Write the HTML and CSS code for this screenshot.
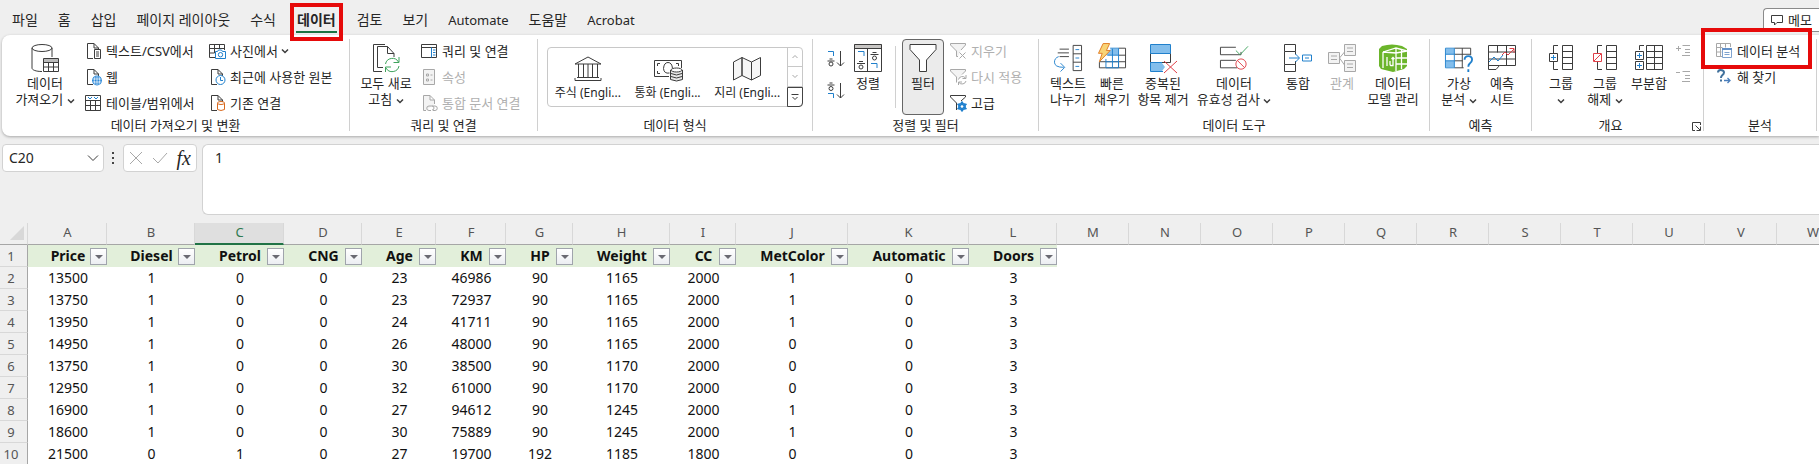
FILE: index.html
```html
<!DOCTYPE html>
<html lang="ko">
<head>
<meta charset="utf-8">
<title>데이터</title>
<link rel="stylesheet" href="styles.css">
</head>
<body>
<svg class="defs" aria-hidden="true">
  <symbol id="chev" viewBox="0 0 8 8"><path class="k" stroke-width="1.500" d="M1 2.500 4 5.500l3-3"/></symbol>
  <symbol id="doc" viewBox="0 0 18 18"><path class="k" d="M8 16.500H2.500v-15H9l4.500 4.500V8M9 1.500V6h4.500"/></symbol>
  <symbol id="tri" viewBox="0 0 8 4"><path fill="#6a6a72" d="M0 0h8L4 4z"/></symbol>
</svg>

<header class="top">
  <nav class="tabs">
    <a href="#">파일</a><a href="#">홈</a><a href="#">삽입</a><a href="#">페이지 레이아웃</a><a href="#">수식</a><a href="#" class="active marked" aria-current="page">데이터</a><a href="#">검토</a><a href="#">보기</a><a href="#" class="latin">Automate</a><a href="#">도움말</a><a href="#" class="latin">Acrobat</a>
  </nav>
  <button class="memo"><svg width="12" height="12" viewBox="0 0 12 12"><path class="k" d="M.5 1.500h11v7H6L3.500 11V8.500h-3z"/></svg>메모</button>
</header>

<main>
<section class="ribbon">
  <div class="group g-import">
    <div class="body">
      <button class="big"><svg class="ic" viewBox="0 0 28 28"><path class="k" d="M11 27.500C5 27.500 1 26 1 24V4M21 4v9"/><ellipse class="k" cx="11" cy="4" rx="10" ry="3.500"/><path class="k" fill="#fff" d="M12.500 14.500h15v13h-15z"/><path fill="#bbb" d="M13 15h14v3H13z"/><path class="k" d="M12.500 18.500h15M12.500 23h15M17.500 18v9.500M22.500 18v9.500"/></svg><span>데이터</span><span>가져오기 <svg class="cv"><use href="#chev"/></svg></span></button>
      <div class="rows">
        <button class="sm"><svg viewBox="0 0 18 18"><use href="#doc"/><path class="k" fill="#fff" d="M9.500 7.500h6v9h-6zM11 10h3M11 12h3M11 14h3"/></svg>텍스트/CSV에서</button>
        <button class="sm"><svg viewBox="0 0 18 18"><use href="#doc"/><circle cx="12" cy="12.500" r="5" fill="#2b88d8"/><path stroke="#fff" fill="none" d="M7.500 11h9M7.500 14h9M12 8v9M10 8.500q-1.500 4 0 8M14 8.500q1.500 4 0 8" stroke-width=".7"/></svg>웹</button>
        <button class="sm"><svg viewBox="0 0 18 18"><path class="k" d="M.5 1.500h15v15H.5zM.5 6.500h15M.5 11.500h15M5.500 6v10.500M10.500 6v10.500"/><path class="b" d="m3 3 2 2 2-2M9 3l2 2 2-2"/></svg>테이블/범위에서</button>
      </div>
      <div class="rows">
        <button class="sm"><svg viewBox="0 0 18 18"><path class="k" d="M6 15.500H.5v-13h15V8M.5 6.500h15M.5 11h5M5.500 2.500V11M10.500 2.500V7"/><path class="b" fill="#fff" d="M6.500 9.500h2l1-1.500h3l1 1.500h3v7h-10z"/><circle class="b" cx="11.500" cy="12.700" r="2.200"/></svg>사진에서 <svg class="cv"><use href="#chev"/></svg></button>
        <button class="sm"><svg viewBox="0 0 18 18"><use href="#doc"/><circle class="b" cx="11.500" cy="12" r="4.500" fill="#fff"/><path class="b" d="M11.500 9v3.500H14"/></svg>최근에 사용한 원본</button>
        <button class="sm"><svg viewBox="0 0 18 18"><use href="#doc"/><path class="o" fill="#fff" d="M8.500 9v6.500q3.500 2 7 0V9"/><ellipse class="o" cx="12" cy="9" rx="3.500" ry="1.500" fill="#fff"/></svg>기존 연결</button>
      </div>
    </div>
    <div class="label">데이터 가져오기 및 변환</div>
  </div>

  <div class="group g-query">
    <div class="body">
      <button class="big"><svg class="ic" viewBox="0 0 28 28"><path class="k" d="M10 27.500H1.500V.5H13M11 23.500H5.500v-21h10l6.500 7V13M15.500 2.500v7H22"/><path class="g" d="M13.500 20a7 7 0 0 1 13-2M27 13v5.500h-5.500M27 22a7 7 0 0 1-13 2M13.500 28v-5h5.500"/></svg><span>모두 새로</span><span>고침 <svg class="cv"><use href="#chev"/></svg></span></button>
      <div class="rows">
        <button class="sm"><svg viewBox="0 0 18 18"><path class="k" d="M.5 2.500h15v13H.5zM.5 5.500h15"/><path class="b" d="M10.500 5.500v10M12 8h2.500M12 10.500h2.500M12 13h2.500"/></svg>쿼리 및 연결</button>
        <button class="sm" disabled><svg viewBox="0 0 18 18"><path class="l" fill="#f3f3f3" d="M2.500 1.500h11v15h-11z"/><path class="l" d="M5.500 6h2v2h-2zM5.500 11h2v2h-2zM9.500 7h2M9.500 12h2"/></svg>속성</button>
        <button class="sm" disabled><svg viewBox="0 0 18 18"><path class="l" fill="#f3f3f3" d="M5 16.500H2.500v-15H9l4.500 4.500v4M9 1.500V6h4.500"/><path class="l" d="M10 16.500H8a2 2 0 0 1 0-4.500h3a2 2 0 0 1 0 4M11 12h3a2 2 0 0 1 0 4.500h-2"/></svg>통합 문서 연결</button>
      </div>
    </div>
    <div class="label">쿼리 및 연결</div>
  </div>

  <div class="group g-types">
    <div class="body">
      <div class="gallery">
        <button class="item"><svg viewBox="0 0 28 25"><path class="k" d="M1 8 14 1l13 7zM1 24.500h26M3 21.500h22M4.500 8v13.500M9.500 8v13.500M14 8v13.500M18.500 8v13.500M23.500 8v13.500M1 22v2.500M27 22v2.500"/></svg><span>주식 (Engli...</span></button>
        <button class="item"><svg viewBox="0 0 28 25"><path class="k" d="M15 20.500H.5v-16h27V12M6 7.500H3.500V10M3.500 15v2.500H6M22 7.500h2.500V10M15.500 17q-5.500 1-6-4.500.5-6 4.500-6 4 0 4.500 6"/><path class="k" fill="#e8e8e8" d="M16.500 14v9.500q6 3 12 0V14"/><ellipse class="k" cx="22.500" cy="14" rx="5.500" ry="2" fill="#fff"/><path class="k" d="M17 17.500q5.500 3 11 0M17 20.500q5.500 3 11 0"/></svg><span>통화 (Engli...</span></button>
        <button class="item"><svg viewBox="0 0 28 25"><path class="k" fill="#f6f6f6" d="m.5 6 8.500-4.500v18L.5 24zM9 1.500 18.500 6v18L9 19.500zM18.500 6l9-4.500v18l-9 4.500z"/></svg><span>지리 (Engli...</span></button>
        <div class="scroll">
          <button disabled aria-label="위로"><svg width="8" height="8" viewBox="0 0 8 8"><path class="l" d="M1.500 5 4 2.500 6.500 5"/></svg></button>
          <button disabled aria-label="아래로"><svg width="8" height="8" viewBox="0 0 8 8"><path class="l" d="M1.500 3 4 5.500 6.500 3"/></svg></button>
          <button class="more" aria-label="자세히"><svg width="8" height="8" viewBox="0 0 8 8"><path class="k" d="M.5 1.500h7M1.500 4 4 6.500 6.500 4"/></svg></button>
        </div>
      </div>
    </div>
    <div class="label">데이터 형식</div>
  </div>

  <div class="group g-sort">
    <div class="body">
      <div class="az">
        <button aria-label="오름차순"><svg width="18" height="18" viewBox="0 0 18 18"><path class="b" d="M1 1.500h5.500V6"/><path class="k" d="M2.500 9h3M.5 11h7M13.500 1v15M10 12.500l3.500 3.500 3.500-3.500"/><circle class="k" cx="4" cy="14" r="2"/></svg></button>
        <button aria-label="내림차순"><svg width="18" height="18" viewBox="0 0 18 18"><path class="k" d="M2.500 1h3M.5 3h7M13.500 1v15M10 12.500l3.500 3.500 3.500-3.500"/><circle class="k" cx="4" cy="6.500" r="2"/><path class="b" d="M1 11.500h5.500V16"/></svg></button>
      </div>
      <button class="big"><svg class="ic" viewBox="0 0 28 28"><path fill="#c8c6c4" d="M0 0h28v4H0z"/><path class="k" d="M.5.500h27v27H.5zM.5 4.500h27M13.500 4.500v23M18.500 8.500h4M16.500 10.500h8M5 17.500h4M3 19.500h8"/><circle class="k" cx="20.500" cy="14" r="2"/><circle class="k" cx="7" cy="23" r="2"/><path class="b" d="M4 7.500h6V12M17 19.500h6V24"/></svg><span>정렬</span></button>
      <i class="rule"></i>
      <button class="big pressed" aria-pressed="true"><svg class="ic" viewBox="0 0 28 28"><path class="k" fill="#fff" d="M1 .5h26v5L17.500 16v11.500h-7V16L1 5.500z"/></svg><span>필터</span></button>
      <div class="rows">
        <button class="sm" disabled><svg viewBox="0 0 18 18"><path class="l" fill="#f3f3f3" d="M8 14.500H6.500V9L.5 3V1.500h15V3L11 8"/><path class="l" d="m9.500 10.500 6 6M15.500 10.500l-6 6"/></svg>지우기</button>
        <button class="sm" disabled><svg viewBox="0 0 18 18"><path class="l" fill="#f3f3f3" d="M6.500 14.500V9L.5 3V1.500h15V3L12 6.500"/><path class="l" d="M8.500 11.500a4 4 0 0 1 7-1.500M16 7v3.500h-3.500M16 13a4 4 0 0 1-7 1.500M8.500 17v-3H12"/></svg>다시 적용</button>
        <button class="sm"><svg viewBox="0 0 18 18"><path class="k" d="M6.500 16V9L.5 3V1.500h15V3L11 7"/><circle cx="12" cy="12.500" r="3" fill="none" stroke="#2b88d8" stroke-width="2"/><path class="b" stroke-width="2" d="M12 7.500v10M7.500 10l9 5M16.500 10l-9 5"/><circle cx="12" cy="12.500" r="1.300" fill="#fff"/></svg>고급</button>
      </div>
    </div>
    <div class="label">정렬 및 필터</div>
  </div>

  <div class="group g-tools">
    <div class="body">
      <button class="big w44"><svg class="ic" viewBox="0 0 30 28"><path class="k" d="M6 4.500h10M4 8.500h12M6 12.500h10M20.500.5h9v27h-9zM20.500 9.500h9M20.500 18.500h9"/><path class="b" d="M23 5h4M23 14h4M23 23h4M5 12.500Q.5 14 .5 18.500.500 24 10.500 24M7 19.500l4.500 4.500L7 28.500"/></svg><span>텍스트</span><span>나누기</span></button>
      <button class="big w44"><svg class="ic" viewBox="0 0 30 28"><path fill="#83beec" d="M14 4h8v7H8z"/><path class="k" d="M22 3.500h7.500v21H1.500v-6M22 11h7.500M1.500 18h28M22 18v6.500"/><path class="b" d="M13 3.500h9v21M8.500 15v9.500H22M8.500 18H22M10 11h12M15.500 4v20"/><path fill="#f8d477" stroke="#e07a1f" d="M5.500-1.500h7L9 6h4L1.500 18l3-9h-4z"/></svg><span>빠른</span><span>채우기</span></button>
      <button class="big w58"><svg class="ic" viewBox="0 0 28 28"><path fill="#83beec" d="M2 1h19v8H2zM2 19h11l3 4-3 4H2z"/><path class="k" d="M1.500 9.500v9h20v-9z"/><path class="b" d="M1.500.5h20v9h-20zM13 18.500H1.500v9H14"/><path class="r" d="m15 17 13 12M28 17 15 29"/></svg><span>중복된</span><span>항목 제거</span></button>
      <button class="big w84"><svg class="ic" viewBox="0 0 30 28"><path class="k" d="M17 2.500H.5v8h22v-3M17 16.500H.5v8h18"/><path class="g" d="m17 6 4.500 4.500L30 1.500"/><circle class="r" cx="22.500" cy="20.500" r="5.500"/><path class="r" d="m18.500 16.500 8 8"/></svg><span>데이터</span><span>유효성 검사 <svg class="cv"><use href="#chev"/></svg></span></button>
      <button class="big w44"><svg class="ic" viewBox="0 0 28 28"><path class="k" d="M.5.500h11v7H.5zM.5 7.500v13M11.500 7.500v3M11.500 17v3.500M.5 20.500h11v7H.5z"/><path class="b" d="M5 14h10M11.500 10l4 4-4 4M18.500 11h9v6h-9zM21 14h4"/></svg><span>통합</span></button>
      <button class="big w44" disabled><svg class="ic" viewBox="0 0 28 28"><path class="l" fill="#f3f3f3" d="M.5 8.500h11v11H.5zM16.500.5h11v11h-11zM16.500 16.500h11v11h-11z"/><path class="l" d="M3 12h6M3 15.500h6M19 4h6M19 7.500h6M19 20h6M19 23.500h6M11.500 14l5-6M11.500 14l5 7"/></svg><span>관계</span></button>
      <button class="big w58"><svg class="ic" viewBox="0 0 28 28"><path fill="#6bb52b" d="m0 5 3-3q10-3 20 0l5 3v17l-3 3-11 3L2 25l-2-3z"/><path fill="none" stroke="#fff" stroke-width="1.300" d="m4 8 13-4 11 3M4 8v16M17 4v23M4 8l13 1 11-2M17 14h11M17 20h11M22.500 6v19"/><path fill="none" stroke="#fff" stroke-width="1.300" d="M8 13v9M11 17v3q0 2 2 1.500h1v-8M12.500 15l1.500-1.500 1.500 1.500"/></svg><span>데이터</span><span>모델 관리</span></button>
    </div>
    <div class="label">데이터 도구</div>
  </div>

  <div class="group g-forecast">
    <div class="body">
      <button class="big w44"><svg class="ic" viewBox="0 0 30 28"><path fill="#83beec" d="M1 4h9v6H1zM1 17h9v7H1z"/><path class="k" d="M10 3.500h17.500V11M10 10h17M10 17h9M10 24.500h10M18.500 3.500v21"/><path class="b" d="M.5 3.500H10v21H.5zM.5 10H10M.5 17H10"/><path class="b" stroke-width="2" d="M21 16q0-4 4-4t4 4q0 2-2.500 4-1.500 1-1.500 3.500M25 26v3"/></svg><span>가상</span><span>분석 <svg class="cv"><use href="#chev"/></svg></span></button>
      <button class="big w42"><svg class="ic" viewBox="0 0 28 28"><path class="k" d="M.5 1.500h27v20h-16L8 25.500H.5zM.5 8h27M.5 15h27M9.500 1.500v7M18.500 1.500v20M.5 21.500h11"/><path class="b" d="m1 18 5-5 4 4 5-6"/><path class="r" d="m14 11 3-3 3 3 6-6M21.500 4.500H26V9"/></svg><span>예측</span><span>시트</span></button>
    </div>
    <div class="label">예측</div>
  </div>

  <div class="group g-outline">
    <div class="body">
      <button class="big w44"><svg class="ic" viewBox="0 0 28 28"><path class="k" d="M11 1.500H6.500V9M11 25.500H6.500V18M15.500 1.500h10v24h-10zM15.500 7.500h10M15.500 13.500h10M15.500 19.500h10"/><path class="k" d="M2.500 9.500h8v8h-8z"/><path class="b" d="M4 13.500h5M6.500 11v5"/></svg><span>그룹</span><span><svg class="cv"><use href="#chev"/></svg></span></button>
      <button class="big w44"><svg class="ic" viewBox="0 0 28 28"><path class="k" d="M11 1.500H6.500V9M11 25.500H6.500V18M15.500 1.500h10v24h-10zM15.500 7.500h10M15.500 13.500h10M15.500 19.500h10"/><path class="r" d="M2.500 9.500h8v8h-8zM3 17l7-7"/></svg><span>그룹</span><span>해제 <svg class="cv"><use href="#chev"/></svg></span></button>
      <button class="big w44"><svg class="ic" viewBox="0 0 28 28"><path class="k" d="M9 1.500H4.500V6M11.500 1.500h16v24h-16zM11.500 7.500h16M11.500 13.500h16M11.500 19.500h16M19.500 1.500v24M.5 7.500h8v8h-8zM.5 17.500h8v8h-8z"/><path class="b" d="M2 11.500h5M4.500 9v5M2 21.500h5M4.500 19v5"/></svg><span>부분합</span></button>
      <div class="rows">
        <button class="sm" disabled aria-label="하위 수준 표시"><svg viewBox="0 0 18 18"><path class="l" d="M0 6.500h5M2.500 4v5M6.500 3.500H14M9 7.500h5M9 10.500h5M6 13.500h8"/></svg></button>
        <button class="sm" disabled aria-label="하위 수준 숨기기"><svg viewBox="0 0 18 18"><path class="l" d="M0 4.500h4M6.500 3.500H14M9 7.500h5M9 10.500h5M6 13.500h8"/></svg></button>
      </div>
    </div>
    <div class="label">개요<button class="launch" aria-label="개요 설정"><svg width="9" height="9" viewBox="0 0 9 9"><path class="k" d="M3 8.500H.5v-8h8V3M3.500 3.500l4.500 4.500M8.500 4.500v4h-4"/></svg></button></div>
  </div>

  <div class="group g-analysis">
    <div class="body">
      <div class="rows">
        <button class="sm marked"><svg viewBox="0 0 18 18"><path class="l" d="M6 14.500H.5v-13h14V5M.5 5.500h6M.5 10h5M4.500 1.500v13M9.500 1.500v4"/><path fill="#fff" stroke="#7fa3cf" d="M6.500 6.500h9v9h-9z"/><path fill="#6390c8" d="M6 6h10v2H6z"/><path stroke="#7fa3cf" d="M8.500 10.500h5M8.500 12.500h5"/></svg>데이터 분석</button>
        <button class="sm"><svg viewBox="0 0 18 18"><path fill="none" stroke="#41719c" stroke-width="2" d="M2 4.500Q2 2 4.500 2 8 2 8 4.500 8 6 6 7.500 5 8.500 5 10M5 11.500v2"/><path fill="none" stroke="#4a7ebb" stroke-width="1.300" d="M8 12.500h6M11.500 10l2.500 2.500-2.500 2.500"/></svg>해 찾기</button>
      </div>
    </div>
    <div class="label">분석</div>
  </div>
</section>

<section class="fbar">
  <div class="namebox"><input aria-label="이름 상자" value="C20"><button aria-label="이름 목록"><svg width="12" height="8" viewBox="0 0 12 8"><path class="k" d="m1 1.500 5 5 5-5"/></svg></button></div>
  <svg class="dots" width="3" height="14" viewBox="0 0 3 14"><path fill="#444" d="M0 1h2v2H0zM0 6h2v2H0zM0 11h2v2H0z"/></svg>
  <div class="fx">
    <button disabled aria-label="취소"><svg width="14" height="14" viewBox="0 0 14 14"><path class="l" d="m1 1 12 12M13 1 1 13"/></svg></button>
    <button disabled aria-label="입력"><svg width="16" height="14" viewBox="0 0 16 14"><path class="l" d="m1 7 5 5L15 2"/></svg></button>
    <button class="fn" aria-label="함수 삽입">fx</button>
  </div>
  <textarea aria-label="수식 입력줄">1</textarea>
</section>

<div class="sheet">
<table>
  <colgroup><col class="c28"><col class="c79"><col class="c88"><col class="c89"><col class="c78"><col class="c74"><col class="c70"><col class="c67"><col class="c97"><col class="c66"><col class="c112"><col class="c121"><col class="c88"><col class="c72" span="11"></colgroup>
  <thead><tr><th class="corner"><svg width="14" height="14" viewBox="0 0 14 14"><path fill="#d8d8d8" d="M14 0v14H0z"/></svg></th><th>A</th><th>B</th><th class="sel">C</th><th>D</th><th>E</th><th>F</th><th>G</th><th>H</th><th>I</th><th>J</th><th>K</th><th>L</th><th>M</th><th>N</th><th>O</th><th>P</th><th>Q</th><th>R</th><th>S</th><th>T</th><th>U</th><th>V</th><th>W</th></tr></thead>
  <tbody>
  <tr class="names"><th>1</th>
    <td>Price<button aria-label="Price 필터"><svg><use href="#tri"/></svg></button></td>
    <td>Diesel<button aria-label="Diesel 필터"><svg><use href="#tri"/></svg></button></td>
    <td>Petrol<button aria-label="Petrol 필터"><svg><use href="#tri"/></svg></button></td>
    <td>CNG<button aria-label="CNG 필터"><svg><use href="#tri"/></svg></button></td>
    <td>Age<button aria-label="Age 필터"><svg><use href="#tri"/></svg></button></td>
    <td>KM<button aria-label="KM 필터"><svg><use href="#tri"/></svg></button></td>
    <td>HP<button aria-label="HP 필터"><svg><use href="#tri"/></svg></button></td>
    <td>Weight<button aria-label="Weight 필터"><svg><use href="#tri"/></svg></button></td>
    <td>CC<button aria-label="CC 필터"><svg><use href="#tri"/></svg></button></td>
    <td>MetColor<button aria-label="MetColor 필터"><svg><use href="#tri"/></svg></button></td>
    <td>Automatic<button aria-label="Automatic 필터"><svg><use href="#tri"/></svg></button></td>
    <td>Doors<button aria-label="Doors 필터"><svg><use href="#tri"/></svg></button></td></tr>
  <tr><th>2</th><td>13500</td><td>1</td><td>0</td><td>0</td><td>23</td><td>46986</td><td>90</td><td>1165</td><td>2000</td><td>1</td><td>0</td><td>3</td></tr>
  <tr><th>3</th><td>13750</td><td>1</td><td>0</td><td>0</td><td>23</td><td>72937</td><td>90</td><td>1165</td><td>2000</td><td>1</td><td>0</td><td>3</td></tr>
  <tr><th>4</th><td>13950</td><td>1</td><td>0</td><td>0</td><td>24</td><td>41711</td><td>90</td><td>1165</td><td>2000</td><td>1</td><td>0</td><td>3</td></tr>
  <tr><th>5</th><td>14950</td><td>1</td><td>0</td><td>0</td><td>26</td><td>48000</td><td>90</td><td>1165</td><td>2000</td><td>0</td><td>0</td><td>3</td></tr>
  <tr><th>6</th><td>13750</td><td>1</td><td>0</td><td>0</td><td>30</td><td>38500</td><td>90</td><td>1170</td><td>2000</td><td>0</td><td>0</td><td>3</td></tr>
  <tr><th>7</th><td>12950</td><td>1</td><td>0</td><td>0</td><td>32</td><td>61000</td><td>90</td><td>1170</td><td>2000</td><td>0</td><td>0</td><td>3</td></tr>
  <tr><th>8</th><td>16900</td><td>1</td><td>0</td><td>0</td><td>27</td><td>94612</td><td>90</td><td>1245</td><td>2000</td><td>1</td><td>0</td><td>3</td></tr>
  <tr><th>9</th><td>18600</td><td>1</td><td>0</td><td>0</td><td>30</td><td>75889</td><td>90</td><td>1245</td><td>2000</td><td>1</td><td>0</td><td>3</td></tr>
  <tr><th>10</th><td>21500</td><td>0</td><td>1</td><td>0</td><td>27</td><td>19700</td><td>192</td><td>1185</td><td>1800</td><td>0</td><td>0</td><td>3</td></tr>
  </tbody>
</table>
</div>
</main>
</body>
</html>
```
FILE: styles.css
```css
* { box-sizing: border-box; }
body {
  margin: 0;
  background: #efefef;
  color: #262626;
  font: 13px/16px "Noto Sans", "Noto Sans CJK KR", sans-serif;
  overflow: hidden;
}
button, input, textarea { font: inherit; color: inherit; border: 0; background: none; padding: 0; margin: 0; }
button:disabled { color: #b0b0b0; }
svg { flex: none; overflow: visible; }
.defs { display: none; }
.k, .b, .g, .r, .o, .l { stroke: #3c3c3c; }
.k:not([fill]), .b:not([fill]), .g:not([fill]), .r:not([fill]), .o:not([fill]), .l:not([fill]) { fill: none; }
.b { stroke: #2080cc; }
.g { stroke: #3ea35c; }
.r { stroke: #e04048; }
.o { stroke: #d9691e; }
.l { stroke: #a8a8a8; }

/* tab strip */
.top { display: flex; justify-content: space-between; height: 35px; }
.tabs { display: flex; gap: 20px; padding: 8px 12px 0; font-size: 14px; line-height: 24px; white-space: nowrap; }
.tabs a { color: inherit; text-decoration: none; height: 25px; }
.tabs .latin { font-size: 13px; }
.tabs .active { line-height: 22px; padding: 1px 1px 0; font-weight: 700; border-bottom: 2px solid #1a7343; }
.marked { position: relative; }
.marked::after { content: ""; position: absolute; border: 4px solid #e60a0a; pointer-events: none; z-index: 2; }
.tabs .marked::after { inset: -5px -6px -10px; }
.memo {
  display: flex; align-items: center; gap: 5px;
  height: 24px; margin: 8px 0 0; padding: 0 7px;
  border: 1px solid #8a8a8a; border-right: 0; border-radius: 4px 0 0 4px;
  background: #fff; font-size: 13px;
}

/* ribbon */
.ribbon {
  display: grid;
  grid-template-columns: 348fr 188fr 275fr 226fr 391fr 102fr 172fr 113fr 2fr;
  margin-left: 2px; padding: 3px 0 2px;
  background: #fff; border-radius: 8px 0 0 8px;
  box-shadow: 0 1px 3px #0000004d;
  white-space: nowrap;
}
.group { position: relative; min-width: 0; border-right: 1px solid #d0d0d0; border-image: linear-gradient(#fff 2px, #d0d0d0 2px, #d0d0d0 92px, #fff 92px) 1; }
.body { display: flex; height: 78px; }
.label { text-align: center; line-height: 18px; }
.big { display: flex; flex-direction: column; align-items: center; justify-content: flex-start; padding-top: 6px; }
.big .ic { height: 28px; width: 28px; margin-bottom: 3px; }
.cv { width: 8px; height: 8px; vertical-align: middle; }
.rows { display: flex; flex-direction: column; }
.sm { display: flex; align-items: center; gap: 3px; height: 26px; text-align: left; }
.sm > svg:first-child { width: 18px; height: 18px; }
.w42 { width: 42px; } .w44 { width: 44px; } .w58 { width: 58px; } .w84 { width: 84px; }

.g-import .body { padding-left: 10px; }
.g-import .big { width: 66px; margin-right: 7px; }
.g-import .rows { width: 124px; }
.g-query .body { padding-left: 6px; }
.g-query .big { width: 60px; margin-right: 5px; }
.g-types .body { padding: 9px 9px 0; }
.gallery { display: flex; flex: 1; height: 60px; border: 1px solid #c8c8c8; border-radius: 4px; }
.item { flex: 1; display: flex; flex-direction: column; align-items: center; padding-top: 8px; gap: 4px; font-size: 12px; }
.item svg { width: 28px; height: 25px; }
.scroll { display: flex; flex-direction: column; width: 15px; }
.scroll button { flex: 1; display: grid; place-items: center; border-left: 1px solid #c8c8c8; border-bottom: 1px solid #c8c8c8; }
.scroll .more { border: 1px solid #444; margin: 0 -1px -1px 0; border-radius: 0 0 4px 0; }
.g-sort .body { padding-left: 12px; }
.az { display: flex; flex-direction: column; gap: 14px; padding-top: 12px; width: 22px; }
.az button { height: 18px; }
.g-sort .big { width: 42px; }
.rule { width: 1px; height: 62px; margin: 8px 6px 0; background: #d0d0d0; }
.g-sort .pressed { padding-top: 5px; margin-top: 1px; height: 76px; background: #ebebeb; outline: 1px solid #666; outline-offset: -1px; border-radius: 4px; }
.g-sort .rows { margin-left: 6px; }
.g-tools .body { padding-left: 7px; }
.g-forecast .body { padding-left: 7px; }
.g-outline .body { padding-left: 7px; }
.g-outline .rows { margin-left: 5px; }
.g-outline .label { padding-right: 14px; }
.launch { position: absolute; right: 2px; bottom: 3px; display: flex; }
.g-analysis .body { padding-left: 12px; }
.g-analysis .marked::after { inset: -10px -12px -5px -15px; }

/* formula bar */
.fbar { display: flex; align-items: flex-start; padding: 8px 0 8px 2px; font-size: 14px; }
.namebox, .fx, .fbar textarea { border: 1px solid #d2d2d2; border-radius: 4px; background: #fff; }
.namebox { display: flex; width: 102px; height: 28px; }
.namebox input { flex: 1; min-width: 0; padding-left: 6px; }
.namebox button { width: 20px; display: grid; place-items: center; }
.dots { margin: 7px 8px 0; }
.fx { display: flex; align-items: center; justify-content: space-between; width: 74px; height: 28px; padding: 0 5px; }
.fx button { display: flex; }
.fx .fn { font: italic 400 20px/20px "Liberation Serif", serif; }
.fbar textarea { flex: 1; height: 71px; margin-left: 5px; padding: 4px 12px; line-height: 18px; resize: none; border-right: 0; border-radius: 6px 0 0 6px; }

/* worksheet */
.sheet { background: #fff; overflow: hidden; }
table { width: 100%; table-layout: fixed; border-collapse: separate; border-spacing: 0; font-size: 14px; line-height: 20px; color: #111; }
th, td { height: 22px; padding: 0 0 0 1px; text-align: center; white-space: nowrap; }
th { background: #efefef; color: #555; font-weight: 400; font-size: 13px; line-height: 18px; }
thead th { padding-bottom: 3px; border-bottom: 1px solid #a6a6a6; border-right: 1px solid #d8d8d8; }
thead .sel { background: #dfdfdf; color: #2f7a50; padding-bottom: 2px; border-bottom: 2px solid #217346; }
.corner svg { display: block; margin: 2px 3px 0 auto; }
tbody th { border-right: 1px solid #a6a6a6; border-bottom: 1px solid #d8d8d8; padding-right: 6px; }
.names td { position: relative; background: #e2efda; font-weight: 700; }
.names button { position: absolute; right: 0; top: 3px; width: 17px; height: 17px; display: grid; place-items: center; border: 1px solid #a0a4ac; background: linear-gradient(#fff, #eceef2); }
.names button svg { width: 8px; height: 4px; }
.c28 { width: 28px; } .c66 { width: 66px; } .c67 { width: 67px; } .c70 { width: 70px; }
.c72 { width: 72px; } .c74 { width: 74px; } .c78 { width: 78px; } .c79 { width: 79px; }
.c88 { width: 88px; } .c89 { width: 89px; } .c97 { width: 97px; } .c112 { width: 112px; } .c121 { width: 121px; }
```
